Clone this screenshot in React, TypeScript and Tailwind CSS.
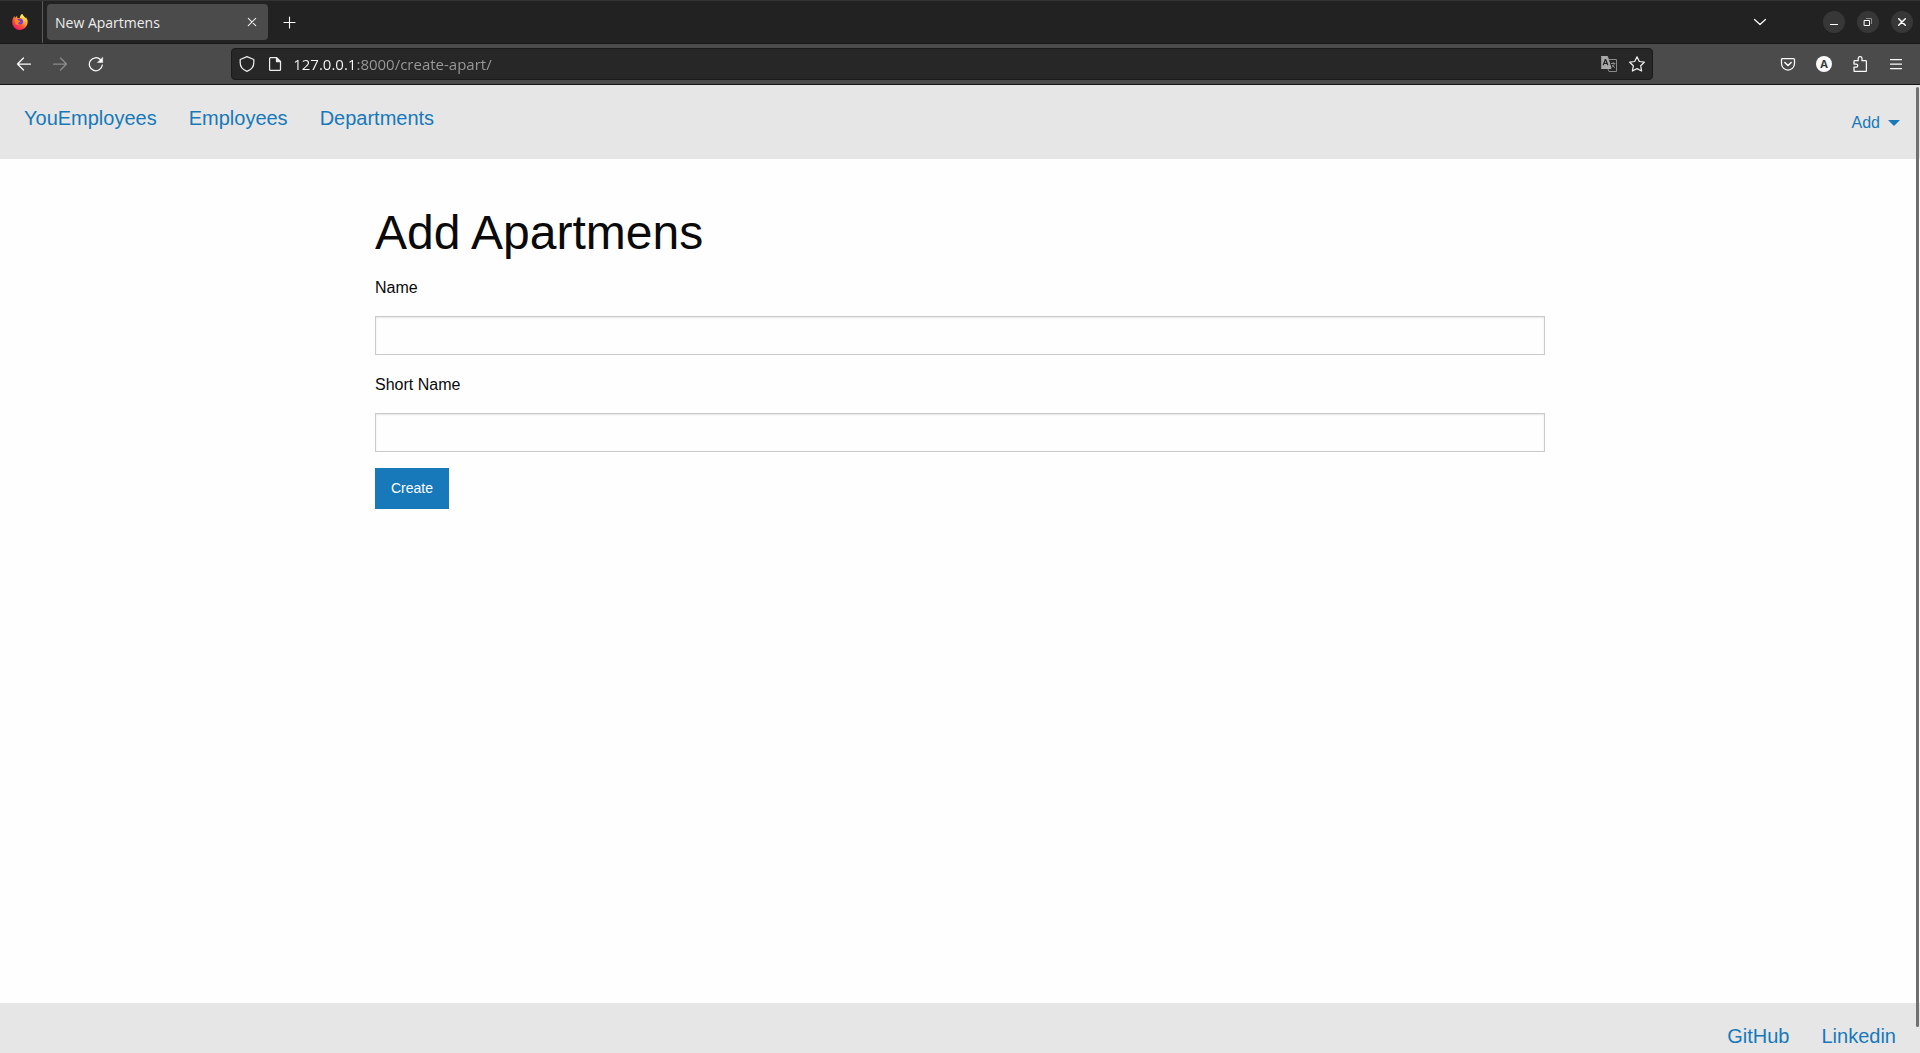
import type { ReactNode } from "react";

function Icon({ size = 16, children }: { size?: number; children: ReactNode }) {
  return (
    <svg
      width={size}
      height={size}
      viewBox="0 0 16 16"
      fill="none"
      stroke="currentColor"
      strokeWidth="1.25"
      strokeLinecap="round"
      strokeLinejoin="round"
      aria-hidden="true"
    >
      {children}
    </svg>
  );
}

function FirefoxLogo() {
  return (
    <svg width="16" height="16" viewBox="0 0 16 16" aria-hidden="true">
      <defs>
        <linearGradient id="flame" x1="0.85" y1="0.1" x2="0.2" y2="0.95">
          <stop offset="0" stopColor="#fff44f" />
          <stop offset="0.35" stopColor="#ffa22a" />
          <stop offset="0.65" stopColor="#ff4b3e" />
          <stop offset="1" stopColor="#f5156c" />
        </linearGradient>
        <linearGradient id="crest" x1="0.6" y1="0" x2="0.6" y2="1">
          <stop offset="0" stopColor="#fff36b" />
          <stop offset="0.6" stopColor="#ffc233" />
          <stop offset="1" stopColor="#ff7d2e" />
        </linearGradient>
      </defs>
      <path
        d="M15.3 5.4c-.3-.9-1-1.8-1.6-2.1.5 1 .8 1.9.9 2.6C13.7 3.7 12 2.9 10.7.9 10.5.5 10.3.3 10.3 0 8.7.9 8.1 2.6 8 3.700c-.8 0-1.500.2-2.200.6-.5-.5-.8-1.200-.6-2.200-1 .5-1.700 1.100-2.200 1.800-.4-.5-.5-1.500-.4-2C1.200 3 .2 5.600.2 8.200a7.700 7.700 0 0 0 15.400.2c.1-1 0-2.100-.3-3z"
        fill="url(#flame)"
      />
      <path
        d="M10.300 0c-1.600.9-2.200 2.600-2.300 3.700 2.500.1 4.200 1.800 4.200 4.200 0 1.500-.7 2.700-1.600 3.300 2.700-.6 4.300-3 4-5.500C13.700 3.500 12 2.900 10.700.9 10.500.5 10.300.3 10.300 0z"
        fill="url(#crest)"
      />
      <circle cx="8" cy="7.600" r="3" fill="#7a3bd8" />
      <path
        d="M2.600 6.200c1.200-1 2.800-.9 4 .2.700.5 1.900.1 1.700.8-.3.700-1.500.9-2 1.600-.3.800.2 1.700 1 2.100-2.400.6-4.700-1.200-4.700-4.700z"
        fill="#ff8a16"
      />
    </svg>
  );
}

function ToolButton({ label, dim, children }: { label: string; dim?: boolean; children: ReactNode }) {
  return (
    <button
      type="button"
      aria-label={label}
      disabled={dim}
      className="flex h-8 w-9 items-center justify-center text-[#fbfbfe] disabled:text-[#8c8c8c]"
    >
      {children}
    </button>
  );
}

function FieldButton({ label, children }: { label: string; children: ReactNode }) {
  return (
    <button type="button" aria-label={label} className="flex h-7 w-7 shrink-0 items-center justify-center text-[#ededed]">
      {children}
    </button>
  );
}

function WindowButton({ label, children }: { label: string; children: ReactNode }) {
  return (
    <button
      type="button"
      aria-label={label}
      className="flex h-[22px] w-[22px] items-center justify-center rounded-full bg-[#373737] text-white"
    >
      {children}
    </button>
  );
}

function TabStrip() {
  return (
    <div className="flex h-11 items-center border-t border-b border-t-[#333] border-b-[#1a1a1a] bg-[#222]">
      <div className="flex w-[43px] items-center justify-center self-stretch border-r border-[#5a5a5a] pr-0.5">
        <FirefoxLogo />
      </div>
      <div className="ml-1 flex h-9 w-[221px] items-center justify-between rounded bg-[#4b4b4b] px-2">
        <span className="text-[14px] text-[#ededed]">New Apartmens</span>
        <button type="button" aria-label="Close tab" className="text-[#ededed]">
          <Icon>
            <path d="M4.300 4.300l7.400 7.400M11.700 4.300l-7.400 7.400" strokeWidth="1.100" />
          </Icon>
        </button>
      </div>
      <button type="button" aria-label="New tab" className="ml-[13px] text-[#fbfbfe]">
        <Icon>
          <path d="M8.500 3v11M3 8.500h11" strokeWidth="1.100" />
        </Icon>
      </button>
      <div className="ml-auto flex items-center gap-3 pr-[7px]">
        <button type="button" aria-label="List all tabs" className="mr-[43px] text-[#fbfbfe]">
          <Icon>
            <path d="M2.500 5.500L8 10.500l5.500-5" />
          </Icon>
        </button>
        <WindowButton label="Minimize">
          <Icon>
            <path d="M4 10.500h8" strokeWidth="1" strokeLinecap="butt" />
          </Icon>
        </WindowButton>
        <WindowButton label="Restore">
          <Icon>
            <path d="M4.500 6.500h5v5h-5z" strokeLinejoin="miter" strokeWidth="1" />
            <path d="M6 4.500h5.500V10" stroke="#8a8a8a" strokeLinejoin="miter" strokeWidth="1" strokeLinecap="butt" />
          </Icon>
        </WindowButton>
        <WindowButton label="Close window">
          <Icon>
            <path d="M4.700 4.700l6.600 6.600M11.300 4.700l-6.600 6.600" strokeWidth="1.500" />
          </Icon>
        </WindowButton>
      </div>
    </div>
  );
}

function AddressBar() {
  return (
    <div className="flex h-8 flex-[121] items-center rounded border border-[#1a1a1a] bg-[#272727] px-px">
      <FieldButton label="Tracking protection">
        <Icon>
          <path d="M8 .7l6.800 2.800v3.300c0 3.400-2.400 6.900-6.800 8.500C3.600 13.700 1.200 10.200 1.200 6.800V3.500z" />
        </Icon>
      </FieldButton>
      <FieldButton label="Site information">
        <Icon>
          <path d="M3.600 1.600h5.900l4 4v7.800a1 1 0 0 1-1 1H3.600a1 1 0 0 1-1-1V2.600a1 1 0 0 1 1-1z" />
          <path d="M9.500 1.600v4h4z" fill="currentColor" />
        </Icon>
      </FieldButton>
      <input
        aria-label="Address"
        defaultValue="127.0.0.1:8000/create-apart/"
        className="ml-1 min-w-0 flex-1 bg-[linear-gradient(90deg,#fbfbfe_63px,#9a9a9a_63px)] bg-clip-text text-[15px] text-transparent outline-none"
      />
      <FieldButton label="Translate this page">
        <Icon>
          <path d="M8.500 3.500h7v12H8l-1-2.500" stroke="#8a8a8a" strokeWidth="1" />
          <path
            d="M10.300 7.500h3.700M12.200 6.500v1M13.500 7.500c-.3 1.800-1.300 3-2.500 3.800M11.300 9.300l2.400 2.200"
            stroke="#8a8a8a"
            strokeWidth="1"
          />
          <path d="M.5.5h6l3.500 12H.5z" fill="#a8a8a8" stroke="#a8a8a8" strokeWidth="1" />
          <path d="M2.300 8.800l2-5.300h.4l2 5.300M3.200 7.300h2.700" stroke="#272727" strokeWidth="1.200" />
        </Icon>
      </FieldButton>
      <FieldButton label="Bookmark this page">
        <Icon>
          <path d="M8 .8l2.300 4.700 5 .7-3.600 3.600.9 5.200L8 12.600 3.400 15l.9-5.200L.7 6.200l5-.7z" />
        </Icon>
      </FieldButton>
    </div>
  );
}

function Toolbar() {
  return (
    <div className="flex h-[41px] items-center border-b border-[#141414] bg-[#4b4b4b] px-1.5">
      <ToolButton label="Back">
        <Icon>
          <path d="M14.500 8H1.700M7.500 2L1.500 8l6 6" />
        </Icon>
      </ToolButton>
      <ToolButton label="Forward" dim>
        <Icon>
          <path d="M1.500 8h12.800M8.500 2l6 6-6 6" />
        </Icon>
      </ToolButton>
      <ToolButton label="Reload">
        <Icon>
          <path d="M14.300 9A6.500 6.500 0 1 1 12.600 3.800" />
          <path d="M14.700 1.500v5H9.700z" fill="currentColor" strokeWidth="0.500" />
        </Icon>
      </ToolButton>
      <div className="flex-[10]" />
      <AddressBar />
      <div className="flex-[10]" />
      <ToolButton label="Save to Pocket">
        <Icon>
          <path d="M2.500 2.500h11a1 1 0 0 1 1 1v4a6.500 6.500 0 0 1-13 0v-4a1 1 0 0 1 1-1z" />
          <path d="M4.800 6.500L8 9.500l3.200-3" strokeWidth="1.500" />
        </Icon>
      </ToolButton>
      <ToolButton label="Account">
        <span className="flex h-4 w-4 items-center justify-center rounded-full bg-[#fbfbfe] text-[11px] leading-4 font-bold text-[#3a3a3a]">
          A
        </span>
      </ToolButton>
      <ToolButton label="Extensions">
        <Icon>
          <path d="M2.700 15.400a.7.7 0 0 1-.7-.7v-3.500h2.200a1.600 1.600 0 0 0 0-3.200H2V5.400c0-.4.300-.7.700-.7h3.500V2.500a1.900 1.900 0 0 1 3.800 0v2.200h3.700c.4 0 .7.300.7.700v9.300c0 .4-.3.700-.7.700z" />
        </Icon>
      </ToolButton>
      <ToolButton label="Open application menu">
        <Icon>
          <path d="M2.500 3.500h11M2.500 8h11M2.500 12.500h11" />
        </Icon>
      </ToolButton>
    </div>
  );
}

function Field({ id, label }: { id: string; label: string }) {
  return (
    <div className="mb-4">
      <label htmlFor={id} className="mb-[14px] block text-base leading-7 text-[#0a0a0a]">
        {label}
      </label>
      <input
        id={id}
        type="text"
        className="block h-[39px] w-full border border-[#cacaca] bg-[#fefefe] px-2 text-base shadow-[inset_0_1px_2px_rgba(10,10,10,0.1)] outline-none"
      />
    </div>
  );
}

export default function App() {
  return (
    <div className="flex h-screen flex-col overflow-hidden bg-[#fefefe]">
      <header className="shrink-0 font-['Open_Sans','Noto_Sans',sans-serif]">
        <TabStrip />
        <Toolbar />
      </header>
      <div className="relative flex min-h-0 flex-1 flex-col font-['Liberation_Sans',Arial,sans-serif]">
        <nav className="flex h-[74px] shrink-0 items-start justify-between bg-[#e6e6e6] px-6 pt-[19px] text-[#1779ba]">
          <div className="flex gap-8 text-xl leading-7">
            <a href="#you">YouEmployees</a>
            <a href="#employees">Employees</a>
            <a href="#departments">Departments</a>
          </div>
          <button type="button" className="mt-[5px] -mr-1 flex items-center gap-2 text-base leading-7">
            Add
            <svg width="12" height="6" viewBox="0 0 12 6" fill="currentColor" aria-hidden="true">
              <path d="M0 0h12L6 6z" />
            </svg>
          </button>
        </nav>
        <main className="mx-auto w-full max-w-[1200px] flex-1 px-[15px] pt-10">
          <h1 className="mb-[7px] text-5xl leading-[68px] text-[#0a0a0a]">Add Apartmens</h1>
          <form onSubmit={(e) => e.preventDefault()}>
            <Field id="name" label="Name" />
            <Field id="short-name" label="Short Name" />
            <button type="submit" className="h-[41px] bg-[#1779ba] px-4 text-[14px] text-[#fefefe]">
              Create
            </button>
          </form>
        </main>
        <footer className="flex h-[50px] shrink-0 justify-end gap-8 bg-[#e6e6e6] px-6 pt-[19px] text-xl leading-7 text-[#1779ba]">
          <a href="#github">GitHub</a>
          <a href="#linkedin">Linkedin</a>
        </footer>
        <div className="absolute top-0.5 right-px bottom-[26px] w-[3px] rounded-full bg-[#707070]" />
      </div>
    </div>
  );
}
